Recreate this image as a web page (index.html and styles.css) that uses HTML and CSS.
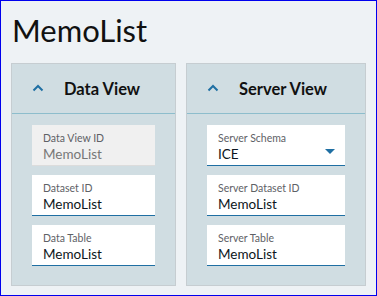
FILE: index.html
```html
<!DOCTYPE html>
<html lang="en">
<head>
    <meta charset="UTF-8">
    <meta name="viewport" content="width=device-width, initial-scale=1.0">
    <title>MemoList</title>
    <link rel="stylesheet" href="styles.css">
</head>
<body>
    <div class="frame">
        <h1 class="title">MemoList</h1>
        <div class="panels">
            <div class="panel panel-data">
                <div class="panel-head">
                    <svg class="chevron" width="12" height="8" viewBox="0 0 12 8"><polyline points="1.5,6.5 6,2 10.5,6.5" fill="none" stroke="#1f6fa3" stroke-width="2"/></svg>
                    <span>Data View</span>
                </div>
                <div class="panel-body">
                    <div class="field disabled">
                        <label>Data View ID</label>
                        <div class="value">MemoList</div>
                    </div>
                    <div class="field">
                        <label>Dataset ID</label>
                        <div class="value">MemoList</div>
                    </div>
                    <div class="field">
                        <label>Data Table</label>
                        <div class="value">MemoList</div>
                    </div>
                </div>
            </div>
            <div class="panel panel-server">
                <div class="panel-head">
                    <svg class="chevron" width="12" height="8" viewBox="0 0 12 8"><polyline points="1.5,6.5 6,2 10.5,6.5" fill="none" stroke="#1f6fa3" stroke-width="2"/></svg>
                    <span>Server View</span>
                </div>
                <div class="panel-body">
                    <div class="field select">
                        <label>Server Schema</label>
                        <div class="value">ICE</div>
                        <span class="caret"></span>
                    </div>
                    <div class="field">
                        <label>Server Dataset ID</label>
                        <div class="value">MemoList</div>
                    </div>
                    <div class="field">
                        <label>Server Table</label>
                        <div class="value">MemoList</div>
                    </div>
                </div>
            </div>
        </div>
    </div>
</body>
</html>
```

FILE: styles.css
```css
* { box-sizing: border-box; }
body { margin: 0; font-family: "Source Sans Pro", Lato, "Liberation Sans", sans-serif; }
.frame {
    width: 377px;
    height: 296px;
    border: 1px solid #0000ee;
    background: #eef2f5;
}
.title {
    margin: 0;
    height: 62px;
    padding: 10px 0 0 11px;
    font-size: 31px;
    font-weight: normal;
    color: #111;
}
.panels {
    display: flex;
    gap: 10px;
    padding-left: 10px;
}
.panel {
    border: 1px solid #c6cdd1;
    background: #d0dde2;
}
.panel-data { width: 165px; }
.panel-server { width: 180px; }
.panel-head {
    height: 50px;
    border-bottom: 1px solid #8dbdcc;
    display: flex;
    align-items: center;
    padding-left: 20px;
    font-size: 16.5px;
    font-weight: bold;
    color: #111;
}
.chevron { margin-right: 20px; margin-top: -2px; }
.panel-body {
    display: flex;
    flex-direction: column;
    gap: 9px;
    padding: 11px 20px 19px;
}
.field {
    position: relative;
    height: 41px;
    background: #fff;
    border-bottom: 1px solid #1f6fa3;
    padding: 6px 0 0 11px;
}
.field label {
    display: block;
    font-size: 10.5px;
    line-height: 14px;
    color: #5e6166;
}
.field .value {
    font-size: 13.5px;
    line-height: 18px;
    color: #0d1620;
}
.field.disabled {
    background: #f0f0f0;
    border-bottom-color: #dcdcdc;
}
.field.disabled .value { color: #777; }
.caret {
    position: absolute;
    right: 10px;
    top: 24px;
    width: 0;
    height: 0;
    border-left: 5px solid transparent;
    border-right: 5px solid transparent;
    border-top: 5px solid #1f6fa3;
}
```
